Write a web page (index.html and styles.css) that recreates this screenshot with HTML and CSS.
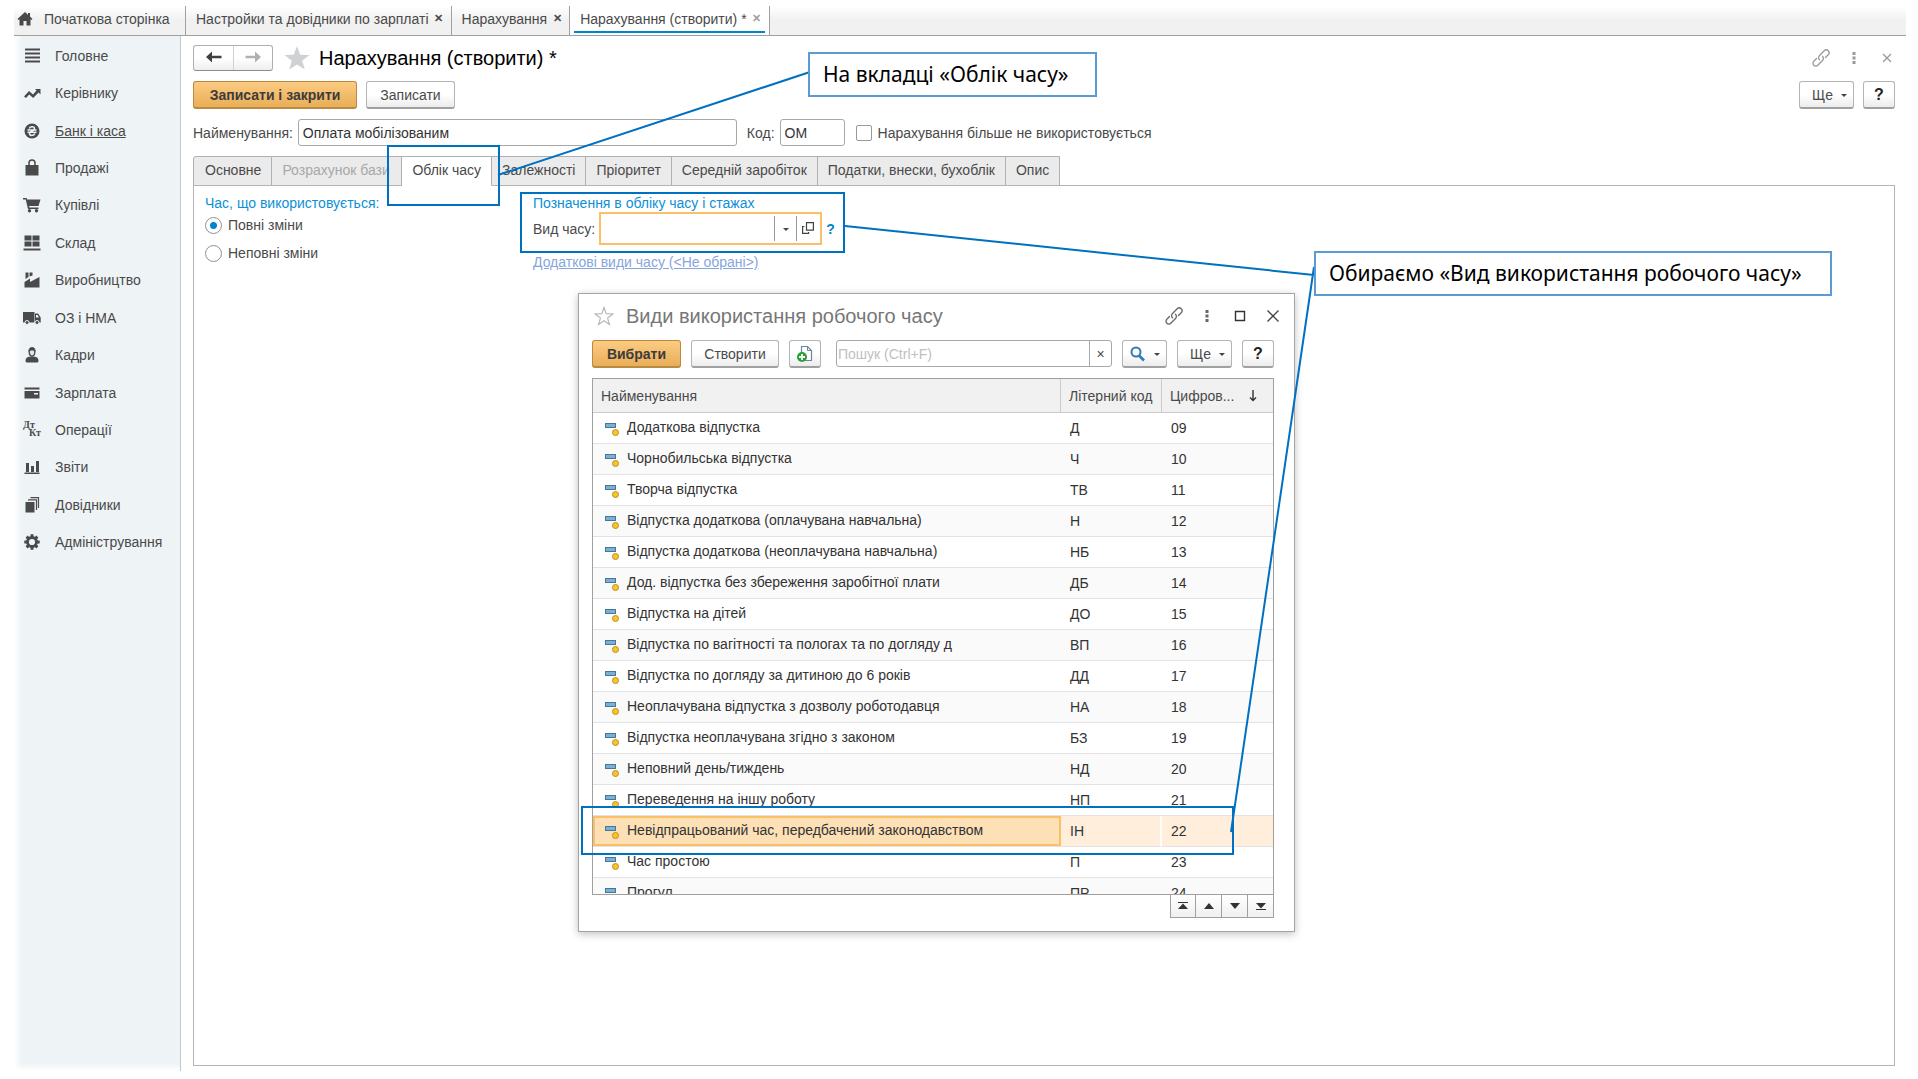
FILE: index.html
```
<!DOCTYPE html>
<html lang="uk">
<head>
  <meta charset="UTF-8">
  <meta name="viewport" content="width=device-width, initial-scale=1.0">
  <title>Нарахування (створити) *</title>
  <link rel="stylesheet" href="styles.css">
</head>
<body>

<!-- icons used more than once -->
<svg class="sprite" aria-hidden="true">
  <symbol id="i-link" viewBox="0 0 20 20"><g fill="none" stroke="currentColor" stroke-width="1.300" stroke-linecap="round"><path d="M8.500 11.800a3 3 0 0 1 0-4.300l4.700-4.700a2.800 2.800 0 0 1 4 4l-2.700 2.700"/><path d="M11.500 8.200a3 3 0 0 1 0 4.300l-4.700 4.700a2.800 2.800 0 0 1-4-4l2.700-2.700"/></g></symbol>
  <symbol id="i-dots" viewBox="0 0 20 20"><path fill="currentColor" d="M8.500 4h3v3h-3zM8.500 8.500h3v3h-3zM8.500 13h3v3h-3z"/></symbol>
  <symbol id="i-row" viewBox="0 0 16 16"><rect x="1.500" y="2.500" width="10" height="4" fill="#79b0d8" stroke="#4a7696"/><circle cx="11.500" cy="11.500" r="3" fill="#f5c52c" stroke="#c08f18"/></symbol>
</svg>

<header class="topbar">
  <a class="home" href="#">
    <svg width="16" height="16" viewBox="0 0 16 16"><path fill="#4a4a4a" d="M8 1 .5 8l1 1L2.500 8.200V14.500h4v-4.500h3v4.500h4V8.200l1 .8 1-1L13 5.500V2h-2v1.700z"/></svg>
    Початкова сторінка
  </a>
  <div class="win-tab"><a href="#">Настройки та довідники по зарплаті</a><button aria-label="Закрити">✕</button></div>
  <div class="win-tab"><a href="#">Нарахування</a><button aria-label="Закрити">✕</button></div>
  <div class="win-tab current"><a href="#">Нарахування (створити) *</a><button aria-label="Закрити">✕</button></div>
</header>

<div class="app">
  <nav class="sidebar">
    <div class="menu">
      <a href="#"><svg viewBox="0 0 18 18"><path d="M2 1.500h15v2H2zM2 5.500h15v2H2zM2 9.500h15v2H2zM2 13.500h15v2H2z"/></svg>Головне</a>
      <a href="#"><svg viewBox="0 0 18 18"><path d="M1 12.500 6 7l4 3.500 3.500-4L12 5h5.500v5.500L15.500 8.500l-5.300 5.500L6.200 10.500 3 14z"/></svg>Керівнику</a>
      <a href="#" class="hover"><svg viewBox="0 0 18 18"><circle cx="9" cy="9" r="7.500"/><path fill="none" stroke="#eef3f6" stroke-width="1.500" d="M6.300 6.500C7 4 11.500 4 11.500 6.500S6.500 9 6.500 11.500 11 14 11.800 11.500M4.500 8h9M4.500 10.300h9"/></svg>Банк і каса</a>
      <a href="#"><svg viewBox="0 0 18 18"><path d="M2.500 6h13v10.500h-13z"/><path fill="none" stroke="#4a4a4a" stroke-width="1.500" d="M6 8V4a3 3 0 0 1 6 0v4"/></svg>Продажі</a>
      <a href="#"><svg viewBox="0 0 18 18"><path d="M0 2h3.500l.7 1.500H17.500L15.500 10H6l.5 1.500h9V13H5L2.700 3.500H0z"/><circle cx="6.500" cy="14.800" r="1.700"/><circle cx="13.500" cy="14.800" r="1.700"/></svg>Купівлі</a>
      <a href="#"><svg viewBox="0 0 18 18"><path d="M1.500 1.500h7v5h-7zM9.500 1.500h7v5h-7zM1.500 7.500h7v5h-7zM9.500 7.500h7v5h-7zM.500 14.500h17v2H.500z"/></svg>Склад</a>
      <a href="#"><svg viewBox="0 0 18 18"><path d="M1.500 16.500V11L7 7.500V11l9.500-5v10.500zM2.500 1.500h3V6l-3 2zM6.500 1.500h3v3l-3 1z"/></svg>Виробництво</a>
      <a href="#"><svg viewBox="0 0 18 18"><path d="M0 3h11.500v10.500H0zM12 4.500h3l2.700 4v5H12z"/><path fill="#eef3f6" d="M13 6h1.500l1.500 2.500h-3z"/><circle cx="4" cy="13.500" r="2" stroke="#eef3f6"/><circle cx="14" cy="13.500" r="2" stroke="#eef3f6"/></svg>ОЗ і НМА</a>
      <a href="#"><svg viewBox="0 0 18 18"><path d="M2.500 15.500c0-4 2-4.500 4.500-5h4c2.500.500 4.500 1 4.500 5l-1 1h-11z"/><ellipse cx="9" cy="6" rx="2.800" ry="4" fill="#dfe5e8" stroke="#4a4a4a" stroke-width="1.300"/><path d="M5.500 6c-1-6.500 8-6.500 7 0-1-2-6-2-7 0z"/></svg>Кадри</a>
      <a href="#"><svg viewBox="0 0 18 18"><path d="M1.500 3.500h15v2h-15zM1.500 7h15v7.500h-15z"/><path fill="#eef3f6" d="M11 9h4v1.500h-4z"/></svg>Зарплата</a>
      <a href="#"><span class="dtkt"><b>Дт</b><b>Кт</b></span>Операції</a>
      <a href="#"><svg viewBox="0 0 18 18"><path d="M1.500 14.500h15V16h-15zM3 5h3v9H3zM8 8h3v6H8zM13 3h3v11h-3z"/></svg>Звіти</a>
      <a href="#"><svg viewBox="0 0 18 18"><path d="M2.500 6h9v10.500h-9z"/><path fill="none" stroke="#4a4a4a" stroke-width="1.200" d="M5 3.800h8.500V14M7.500 1.600h8V12"/></svg>Довідники</a>
      <a href="#"><svg viewBox="0 0 18 18"><circle cx="9" cy="9" r="4.500" fill="none" stroke="#4a4a4a" stroke-width="2.800"/><path fill="none" stroke="#4a4a4a" stroke-width="3" d="M9 1.300v3M9 13.700v3M1.300 9h3M13.700 9h3M3.600 3.600l2 2M12.400 12.400l2 2M14.400 3.600l-2 2M5.600 12.400l-2 2"/></svg>Адміністрування</a>
    </div>
  </nav>

  <main class="content">
    <div class="title-row">
      <div class="history">
        <button aria-label="Назад"><svg width="16" height="12" viewBox="0 0 16 12"><path fill="#404040" d="M0 6 6 .500V4.700h9.500v2.600H6v4.200z"/></svg></button>
        <button aria-label="Вперед"><svg width="16" height="12" viewBox="0 0 16 12"><path fill="#b0b0b0" d="M16 6 10 .500V4.700H.500v2.600H10v4.200z"/></svg></button>
      </div>
      <svg class="star" width="26" height="24" viewBox="0 0 26 24"><path fill="#cfd1d3" d="m13 0 3.200 8.700 9.300.3-7.300 5.700 2.600 8.900L13 18.400l-7.800 5.200 2.600-8.900L.500 9l9.300-.3z"/></svg>
      <h1>Нарахування (створити) *</h1>
      <div class="win-icons muted">
        <svg><use href="#i-link"/></svg>
        <svg><use href="#i-dots"/></svg>
        <svg viewBox="0 0 20 20"><path fill="none" stroke="currentColor" stroke-width="1.300" d="m6 6 8 8M14 6l-8 8"/></svg>
      </div>
    </div>

    <div class="commands">
      <button class="btn primary save-close">Записати і закрити</button>
      <button class="btn save">Записати</button>
      <button class="btn more push">Ще <i class="caret"></i></button>
      <button class="btn help">?</button>
    </div>

    <form class="fields">
      <label for="name">Найменування:</label>
      <input class="text name" id="name" type="text" value="Оплата мобілізованим">
      <label for="code">Код:</label>
      <input class="text code" id="code" type="text" value="ОМ">
      <label class="check"><input type="checkbox">Нарахування більше не використовується</label>
    </form>

    <div class="tabs" role="tablist">
      <button role="tab">Основне</button>
      <button role="tab" class="base" disabled>Розрахунок бази</button>
      <button role="tab" class="on" aria-selected="true">Облік часу</button>
      <button role="tab">Залежності</button>
      <button role="tab">Пріоритет</button>
      <button role="tab">Середній заробіток</button>
      <button role="tab">Податки, внески, бухоблік</button>
      <button role="tab">Опис</button>
    </div>

    <section class="panel">
      <div class="used-time">
        <h2>Час, що використовується:</h2>
        <label><input type="radio" name="shift" checked>Повні зміни</label>
        <label><input type="radio" name="shift">Неповні зміни</label>
      </div>
      <div class="marks">
        <h2>Позначення в обліку часу і стажах</h2>
        <div class="kind-row">
          <label for="kind">Вид часу:</label>
          <div class="picker">
            <input id="kind" type="text">
            <button aria-label="Список"><i class="caret"></i></button>
            <button aria-label="Відкрити"><svg width="12" height="12" viewBox="0 0 12 12"><path fill="none" stroke="#444" stroke-width="1.200" d="M4.500.600h6.900v7.500H4.500zM2.500 4.500H.600v6.900h6V10"/></svg></button>
          </div>
          <a class="hint" href="#">?</a>
        </div>
        <a class="extra" href="#">Додаткові види часу (&lt;Не обрані&gt;)</a>
      </div>
    </section>
  </main>
</div>

<div class="dialog" role="dialog" aria-labelledby="dlg-title">
  <div class="dialog-title">
    <svg width="20" height="20" viewBox="0 0 20 20"><path fill="none" stroke="#b5b9bd" stroke-width="1.200" d="m10 1.500 2.200 6.200 6.800.3-5.400 4.100 1.900 6.400L10 14.800l-5.500 3.700 1.900-6.400L1 8l6.800-.3z"/></svg>
    <h2 id="dlg-title">Види використання робочого часу</h2>
    <div class="win-icons">
      <svg><use href="#i-link"/></svg>
      <svg><use href="#i-dots"/></svg>
      <svg viewBox="0 0 20 20"><path fill="none" stroke="#333" stroke-width="1.400" d="M5.500 5.500h9v9h-9z"/></svg>
      <svg viewBox="0 0 20 20"><path fill="none" stroke="#444" stroke-width="1.300" d="m4.500 4.500 11 11M15.500 4.500l-11 11"/></svg>
    </div>
  </div>

  <div class="dialog-bar">
    <button class="btn primary choose">Вибрати</button>
    <button class="btn create">Створити</button>
    <button class="btn copy" aria-label="Скопіювати"><svg width="18" height="18" viewBox="0 0 18 18"><path fill="#fff" stroke="#6b879c" stroke-width="1.200" d="M5.500 1.500h6l4 4v10h-10z"/><path fill="none" stroke="#6b879c" d="M11.500 1.500v4h4"/><circle cx="6" cy="12" r="5" fill="#27a038"/><path stroke="#fff" stroke-width="1.800" d="M6 9v6M3 12h6"/></svg></button>
    <div class="search">
      <input type="text" placeholder="Пошук (Ctrl+F)" aria-label="Пошук">
      <button aria-label="Очистити">×</button>
    </div>
    <button class="btn find" aria-label="Знайти"><svg width="16" height="16" viewBox="0 0 16 16"><circle cx="6" cy="6" r="4.500" fill="none" stroke="#2f7cb5" stroke-width="2"/><path stroke="#2f7cb5" stroke-width="2.600" d="m9 9.500 5 5"/></svg><i class="caret"></i></button>
    <button class="btn more">Ще <i class="caret"></i></button>
    <button class="btn help">?</button>
  </div>

  <div class="list">
    <table>
      <thead>
        <tr><th>Найменування</th><th class="c-code">Літерний код</th><th class="c-num"><div>Цифров...<svg width="8" height="12" viewBox="0 0 8 12"><path fill="none" stroke="#333" stroke-width="1.400" d="M4 0v10M1 7.500l3 3 3-3"/></svg></div></th></tr>
      </thead>
      <tbody id="rows"></tbody>
    </table>
  </div>

  <div class="pager">
    <button aria-label="На початок"><svg viewBox="0 0 12 10"><path d="M1 1h10v1H1zM6 2.500 11 8H1z"/></svg></button>
    <button aria-label="Вгору"><svg viewBox="0 0 12 10"><path d="m6 2 5 6H1z"/></svg></button>
    <button aria-label="Вниз"><svg viewBox="0 0 12 10"><path d="m6 8 5-6H1z"/></svg></button>
    <button aria-label="У кінець"><svg viewBox="0 0 12 10"><path d="M1 8h10v1H1zM6 7.500 11 2H1z"/></svg></button>
  </div>
</div>

<!-- hints drawn over the form -->
<svg class="arrows" aria-hidden="true">
  <g fill="none" stroke="#0070c0" stroke-width="2">
    <path d="M388 146h111v59H388z"/>
    <path d="M521 193h323v59H521z"/>
    <path d="M582 807h651v47H582z"/>
    <path d="m498 175 315-104M845 226l469 49M1314 267l-83 565"/>
  </g>
</svg>
<div class="note note-tab">На вкладці «Облік часу»</div>
<div class="note note-kind">Обираємо «Вид використання робочого часу»</div>

<script>
  const kinds = [
    ["Додаткова відпустка", "Д", "09"],
    ["Чорнобильська відпустка", "Ч", "10"],
    ["Творча відпустка", "ТВ", "11"],
    ["Відпустка додаткова (оплачувана навчальна)", "Н", "12"],
    ["Відпустка додаткова (неоплачувана навчальна)", "НБ", "13"],
    ["Дод. відпустка без збереження заробітної плати", "ДБ", "14"],
    ["Відпустка на дітей", "ДО", "15"],
    ["Відпустка по вагітності та пологах та по догляду д", "ВП", "16"],
    ["Відпустка по догляду за дитиною до 6 років", "ДД", "17"],
    ["Неоплачувана відпустка з дозволу роботодавця", "НА", "18"],
    ["Відпустка неоплачувана згідно з законом", "БЗ", "19"],
    ["Неповний день/тиждень", "НД", "20"],
    ["Переведення на іншу роботу", "НП", "21"],
    ["Невідпрацьований час, передбачений законодавством", "ІН", "22"],
    ["Час простою", "П", "23"],
    ["Прогул", "ПР", "24"]
  ];

  document.getElementById("rows").innerHTML = kinds.map(([name, code, num]) => `
    <tr class="${num === "22" ? "selected" : ""}">
      <td><svg width="16" height="16"><use href="#i-row"/></svg>${name}</td>
      <td>${code}</td>
      <td>${num}</td>
    </tr>`).join("");
</script>

</body>
</html>
```
FILE: styles.css
```
* {
  box-sizing: border-box;
}
body {
  margin: 0;
  padding: 6px 12px 8px 14px;
  min-height: 100vh;
  display: flex;
  flex-direction: column;
  position: relative;
  font-family: "Liberation Sans", Arial, sans-serif;
  font-size: 14px;
  color: #4a4a4a;
  background: #fff;
  overflow: hidden;
}
h1, h2 {
  margin: 0;
  font-weight: normal;
}
a {
  color: inherit;
  text-decoration: none;
}
button, input {
  font: inherit;
  color: inherit;
}
button {
  padding: 0;
  border: none;
  background: none;
}
.sprite {
  position: absolute;
  width: 0;
  height: 0;
}

/* window tabs */
.topbar {
  display: flex;
  height: 30px;
  border-bottom: 1px solid #a0a0a0;
  background: linear-gradient(to bottom, #fff, #f1f1f1 14px);
}
.home {
  display: flex;
  align-items: center;
  gap: 11px;
  width: 171px;
  padding: 0 0 4px 3px;
}
.win-tab {
  display: flex;
  align-items: center;
  gap: 4px;
  padding: 0 6px 4px 10px;
  border-left: 1px solid #a0a0a0;
}
.win-tab button {
  width: 12px;
  font-size: 11px;
  font-weight: bold;
}
.win-tab.current {
  border-right: 1px solid #a0a0a0;
  background: linear-gradient(#0084cc, #0084cc) center 25px / calc(100% - 8px) 2px no-repeat #fff;
}
.win-tab.current button {
  color: #a0a0a0;
}

.app {
  flex: 1;
  display: flex;
}
.sidebar {
  width: 167px;
  padding-top: 1px;
  border-right: 1px solid #c4c8cb;
  background:
    linear-gradient(to top, #fff, transparent 8px),
    linear-gradient(to right, #fff, #eef3f6 8px);
}
.menu {
  display: grid;
  grid-auto-rows: 1fr;
  height: 524px;
}
.menu a {
  display: flex;
  align-items: center;
  gap: 14px;
  padding-left: 9px;
}
.menu svg, .dtkt {
  width: 18px;
  height: 18px;
  fill: #4a4a4a;
}
.dtkt {
  font-family: "Liberation Serif", serif;
  font-size: 10px;
  line-height: 8px;
}
.dtkt b {
  display: block;
}
.dtkt b + b {
  text-align: right;
}
.menu .hover {
  text-decoration: underline;
}

.content {
  flex: 1;
  display: flex;
  flex-direction: column;
  padding: 9px 11px 5px 12px;
}
.title-row {
  display: flex;
  align-items: center;
  height: 26px;
  gap: 11px;
}
.history {
  display: flex;
  border: 1px solid #b0b0b0;
  border-bottom-color: #8c8c8c;
  border-radius: 3px;
  background: linear-gradient(#fff 50%, #eee);
}
.history button {
  width: 39px;
  height: 24px;
}
.history button + button {
  border-left: 1px solid #d0d0d0;
}
h1 {
  font-size: 20px;
  color: #000;
  margin-left: -2px;
}
.win-icons {
  display: flex;
  gap: 13px;
  margin-left: auto;
  color: #666;
}
.win-icons svg {
  width: 20px;
  height: 20px;
}
.win-icons.muted {
  color: #999;
  margin-right: -2px;
}

.commands {
  display: flex;
  gap: 9px;
  margin-top: 10px;
}
.btn {
  height: 28px;
  border: 1px solid #b4b4b4;
  border-bottom: 2px solid #a0a0a0;
  border-radius: 3px;
  background: linear-gradient(#fff 50%, #ececec);
  white-space: nowrap;
}
.btn.primary {
  border-color: #b98a40;
  background: linear-gradient(#fccb82, #e9ae58);
  font-weight: bold;
  color: #3c3c3c;
}
.save-close {
  width: 164px;
}
.save {
  width: 89px;
}
.more {
  width: 55px;
  padding-left: 6px;
}
.push {
  margin-left: auto;
}
.help {
  width: 32px;
  font-size: 16px;
  font-weight: bold;
  color: #222;
}
.caret {
  display: inline-block;
  border: 3px solid transparent;
  border-top-color: #444;
  border-bottom: 0;
  margin-left: 4px;
  vertical-align: middle;
}

.fields {
  display: flex;
  align-items: center;
  gap: 5px;
  margin-top: 10px;
}
.text {
  height: 27px;
  padding: 0 4px;
  border: 1px solid #a8a8a8;
  border-radius: 3px;
  color: #333;
}
.name {
  width: 439px;
  margin-right: 5px;
}
.code {
  width: 65px;
  margin-right: 6px;
}
.check {
  display: flex;
  align-items: center;
  gap: 6px;
}
.check input {
  appearance: none;
  width: 16px;
  height: 16px;
  margin: 0;
  border: 1px solid #999;
  border-radius: 2px;
}

.tabs {
  display: flex;
  margin-top: 10px;
}
.tabs button {
  height: 30px;
  padding: 0 10px 2px;
  margin-bottom: -1px;
  border: 1px solid #b0b0b0;
  border-left-width: 0;
  background: #ebebeb;
  white-space: nowrap;
}
.tabs button:first-child {
  padding-left: 11px;
  border-left-width: 1px;
  border-radius: 3px 0 0 0;
}
.tabs .base {
  width: 130px;
  text-align: left;
  color: #a8a8a8;
}
.tabs .on {
  position: relative;
  background: #fff;
  border-bottom-color: #fff;
}
.panel {
  flex: 1;
  display: flex;
  padding: 8px 11px;
  border: 1px solid #b4b4b4;
}
.panel h2 {
  font-size: 14px;
  line-height: 18px;
  color: #0d8fd6;
}
.used-time {
  width: 328px;
}
.used-time label {
  display: flex;
  align-items: center;
  gap: 6px;
  height: 28px;
}
.used-time h2 + label {
  margin-top: -1px;
}
.used-time input {
  appearance: none;
  width: 17px;
  height: 17px;
  margin: 0;
  border: 1px solid #8f8f8f;
  border-radius: 50%;
}
.used-time input:checked {
  background: radial-gradient(#0084cc 3px, #fff 4px);
}
.kind-row {
  display: flex;
  align-items: center;
  gap: 4px;
}
.picker {
  display: flex;
  align-items: center;
  width: 223px;
  height: 33px;
  padding-right: 2px;
  border: 2px solid #fbc066;
}
.picker input {
  flex: 1;
  min-width: 0;
  border: none;
  outline: none;
}
.picker button {
  width: 22px;
  height: 25px;
  border-left: 1px solid #999;
}
.picker .caret {
  margin: 0;
}
.hint {
  font-weight: bold;
  color: #0084cc;
}
.extra {
  display: inline-block;
  margin-top: 9px;
  color: #86a5de;
  text-decoration: underline;
}

/* selection window */
.dialog {
  position: absolute;
  left: 578px;
  top: 293px;
  width: 717px;
  padding: 10px 20px 13px 13px;
  border: 1px solid #a4a4a4;
  background: #fff;
  box-shadow: 0 2px 8px rgba(0, 0, 0, 0.25);
}
.dialog-title {
  display: flex;
  align-items: center;
  gap: 12px;
  height: 24px;
  padding-left: 2px;
}
.dialog-title h2 {
  font-size: 20px;
  color: #777;
}
.dialog-title .win-icons {
  margin-right: -9px;
}
.dialog-bar {
  display: flex;
  gap: 10px;
  margin-top: 12px;
}
.choose {
  width: 89px;
}
.create {
  width: 88px;
}
.copy {
  width: 32px;
}
.copy svg, .find svg {
  vertical-align: middle;
}
.search {
  flex: 1;
  display: flex;
  height: 27px;
  margin-left: 5px;
  border: 1px solid #a8a8a8;
  border-radius: 3px;
}
.search input {
  flex: 1;
  min-width: 0;
  padding: 0 1px;
  border: none;
  background: none;
}
.search input::placeholder {
  color: #c0c0c0;
}
.search button {
  width: 22px;
  border-left: 1px solid #a8a8a8;
}
.find {
  width: 45px;
}
.find .caret {
  margin-left: 8px;
}
.dialog-bar .help {
  width: 32px;
}
.list {
  height: 517px;
  margin-top: 10px;
  border: 1px solid #a0a0a0;
  overflow: hidden;
}
table {
  width: 100%;
  table-layout: fixed;
  border-collapse: separate;
  border-spacing: 0;
}
th {
  height: 34px;
  padding: 0 8px;
  border-right: 1px solid #ccc;
  border-bottom: 1px solid #ccc;
  background: #f1f1f1;
  font-weight: normal;
  text-align: left;
  white-space: nowrap;
}
th:last-child {
  border-right: none;
}
.c-code {
  width: 101px;
}
.c-num {
  width: 111px;
}
.c-num div {
  display: flex;
  align-items: center;
  justify-content: space-between;
  padding-right: 8px;
}
td {
  height: 31px;
  padding: 0 9px;
  border-bottom: 1px solid #e2e2e2;
  color: #333;
  white-space: nowrap;
}
td svg {
  margin: 0 7px 0 2px;
  vertical-align: -5px;
}
tbody tr:nth-child(even) {
  background: #fafafa;
}
.selected td {
  border-right: 2px solid #fff;
  background: #ffeedb;
}
.selected td:first-child {
  border-right: none;
  background: #fde0b5;
  box-shadow: inset 0 0 0 2px #fbc066;
}
.selected td:last-child {
  border-right: none;
}
.pager {
  display: flex;
  justify-content: flex-end;
}
.pager button {
  width: 26px;
  height: 23px;
  border: 1px solid #a0a0a0;
  border-left-width: 0;
  border-top: none;
  background: linear-gradient(#fff, #f0f0f0);
}
.pager button:first-child {
  border-left-width: 1px;
}
.pager svg {
  width: 12px;
  height: 10px;
  fill: #333;
}

/* hints */
.arrows {
  position: absolute;
  left: 0;
  top: 0;
  width: 100%;
  height: 100%;
  pointer-events: none;
}
.note {
  position: absolute;
  padding: 0 13px;
  border: 2px solid #5b9bd5;
  background: #fff;
  font-family: "Noto Sans", sans-serif;
  font-size: 21px;
  line-height: 41px;
  color: #000;
  white-space: nowrap;
}
.note-tab {
  left: 808px;
  top: 52px;
  width: 289px;
}
.note-kind {
  left: 1314px;
  top: 251px;
  width: 518px;
}
```
